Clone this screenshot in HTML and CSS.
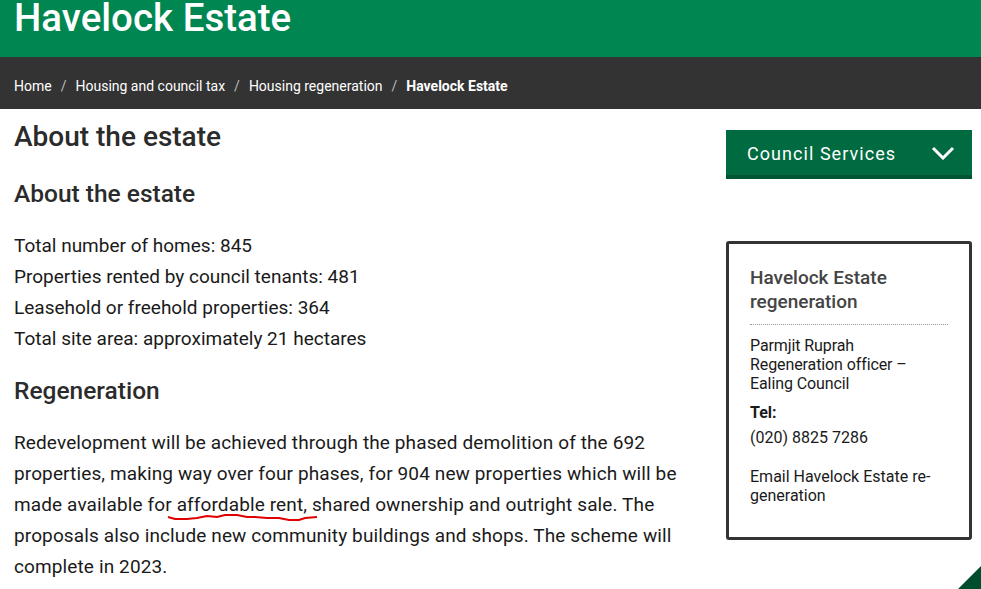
FILE: index.html
```html
<!DOCTYPE html>
<html lang="en">
<head>
<meta charset="utf-8">
<title>Havelock Estate</title>
<link rel="stylesheet" href="styles.css">
</head>
<body>
<header class="banner">
  <h1 class="banner-title">Havelock Estate</h1>
</header>
<nav class="crumbs">
  <a href="#">Home</a><span class="sep">/</span><a href="#">Housing and council tax</a><span class="sep">/</span><a href="#">Housing regeneration</a><span class="sep">/</span><strong>Havelock Estate</strong>
</nav>
<div class="page">
  <main class="content">
    <h1 class="page-title">About the estate</h1>
    <h2 class="section-title">About the estate</h2>
    <p class="facts">Total number of homes: 845<br>Properties rented by council tenants: 481<br>Leasehold or freehold properties: 364<br>Total site area: approximately 21 hectares</p>
    <h2 class="section-title regen">Regeneration</h2>
    <p class="body-text">Redevelopment will be achieved through the phased demolition of the 692 properties, making way over four phases, for 904 new properties which will be made available for <span class="marked">affordable rent,<svg class="squiggle" width="152" height="10" viewBox="0 0 152 10"><polyline points="1,3 8,5 20,5 30,4 40,2 50,3 58,1 70,1 80,3 88,3 100,4 112,4 122,6 132,6 138,4 150,3" fill="none" stroke="#e00000" stroke-width="2"/></svg></span> shared ownership and outright sale. The proposals also include new community buildings and shops. The scheme will complete in 2023.</p>
  </main>
  <aside class="sidebar">
    <button class="services" type="button">
      <span>Council Services</span>
      <svg width="24" height="14" viewBox="0 0 24 14"><polyline points="2,2 12,12 22,2" fill="none" stroke="#fff" stroke-width="3"/></svg>
    </button>
    <section class="contact">
      <h3 class="contact-title">Havelock Estate regeneration</h3>
      <p class="contact-name">Parmjit Ruprah<br>Regeneration officer –<br>Ealing Council</p>
      <p class="contact-label">Tel:</p>
      <p class="contact-tel">(020) 8825 7286</p>
      <p class="contact-mail">Email Havelock Estate re-<br>generation</p>
    </section>
  </aside>
</div>
<a class="to-top" href="#" aria-label="Back to top"></a>
</body>
</html>
```
FILE: styles.css
```css
html, body {
  margin: 0;
  padding: 0;
}
body {
  font-family: Roboto, "Liberation Sans", sans-serif;
  color: #1a1a1a;
  background: #fff;
  overflow: hidden;
  height: 589px;
  position: relative;
}
.banner {
  background: #008651;
  height: 57px;
  padding: 0 14px;
  overflow: hidden;
}
.banner-title {
  margin: 0;
  color: #fff;
  font-size: 38.5px;
  font-weight: 500;
  line-height: 38px;
  position: relative;
  top: -1px;
}
.crumbs {
  background: #333333;
  height: 52px;
  padding: 6px 14px 0;
  box-sizing: border-box;
  display: flex;
  align-items: center;
  font-size: 14px;
  color: #fff;
}
.crumbs a {
  color: #fff;
  text-decoration: none;
}
.crumbs .sep {
  color: #bbb;
  margin: 0 9px;
}
.crumbs strong {
  font-weight: 700;
}
.page {
  display: flex;
  padding: 0 9px 0 14px;
}
.content {
  width: 680px;
  flex: none;
}
.page-title {
  margin: 12px 0 0;
  font-size: 28px;
  font-weight: 500;
  line-height: 32px;
  color: #2b2b2b;
}
.section-title {
  margin: 25px 0 0;
  font-size: 24.5px;
  font-weight: 500;
  line-height: 32px;
  color: #2b2b2b;
}
.facts {
  margin: 20px 0 0;
  font-size: 19px;
  line-height: 31px;
}
.regen {
  margin-top: 21px;
}
.body-text {
  margin: 20px 0 0;
  font-size: 19px;
  letter-spacing: 0.12px;
  line-height: 31px;
}
.marked {
  position: relative;
}
.squiggle {
  position: absolute;
  left: -10px;
  top: 21px;
}
.sidebar {
  margin-left: 32px;
  width: 246px;
  flex: none;
}
.services {
  margin-top: 21px;
  width: 246px;
  height: 49px;
  background: #006a40;
  border: 0;
  border-bottom: 4px solid #005632;
  color: #fff;
  font-family: Roboto, "Liberation Sans", sans-serif;
  font-size: 18px;
  letter-spacing: 1.05px;
  display: flex;
  align-items: center;
  justify-content: space-between;
  padding: 1px 17px 0 21px;
  box-sizing: border-box;
}
.services svg {
  display: block;
}
.contact {
  margin-top: 62px;
  border: 3px solid #333;
  border-radius: 3px;
  padding: 22px 21px 26px;
  height: 299px;
  box-sizing: border-box;
}
.contact-title {
  margin: 0;
  font-size: 19px;
  font-weight: 500;
  line-height: 24px;
  color: #444;
  padding-bottom: 10px;
  border-bottom: 1px dotted #999;
}
.contact-name {
  margin: 11px 0 0;
  font-size: 16px;
  letter-spacing: -0.1px;
  line-height: 19px;
}
.contact-label {
  margin: 10px 0 0;
  font-size: 16px;
  font-weight: 700;
  line-height: 19px;
}
.contact-tel {
  margin: 6px 0 0;
  font-size: 16px;
  line-height: 19px;
}
.contact-mail {
  margin: 20px 0 0;
  font-size: 16px;
  line-height: 19px;
}
.to-top {
  position: absolute;
  right: 0;
  bottom: 0;
  width: 0;
  height: 0;
  border-style: solid;
  border-width: 0 0 23px 23px;
  border-color: transparent transparent #004d2e transparent;
}
```
